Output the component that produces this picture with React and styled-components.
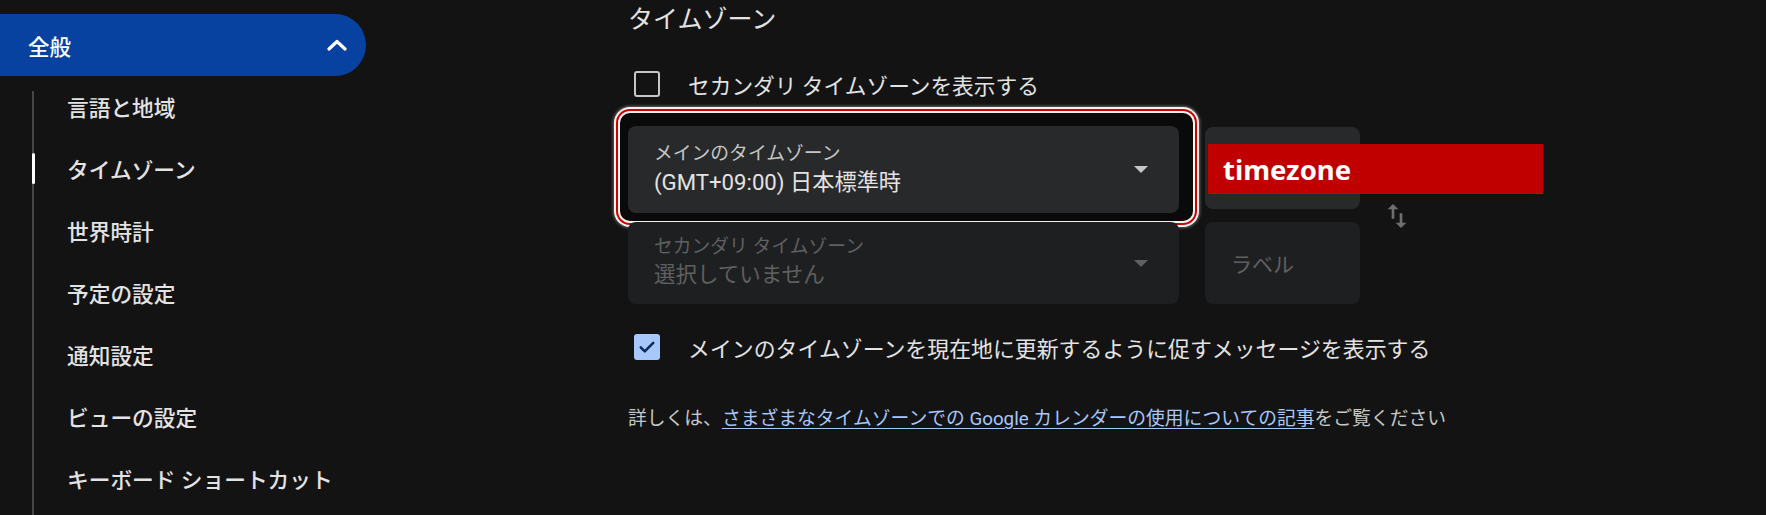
import React from "react";
import styled, { createGlobalStyle } from "styled-components";

const GlobalStyle = createGlobalStyle`
  html, body {
    margin: 0;
    background: #131313;
  }
  body {
    font-family: Roboto, "Noto Sans CJK JP", sans-serif;
    color: #e3e3e3;
  }
`;

const Page = styled.div`
  display: grid;
  grid-template-columns: 366px 1fr;
  height: 515px;
  overflow: hidden;
  background: #131313;
`;

const Sidebar = styled.nav`
  padding-top: 14px;
`;

const SectionHeader = styled.div`
  height: 62px;
  background: #0842a0;
  border-radius: 0 31px 31px 0;
  display: flex;
  align-items: center;
  justify-content: space-between;
  padding: 0 19px 0 28px;
  font-size: 21.5px;
  font-weight: 500;
  color: #fff;
`;

const NavList = styled.ul`
  position: relative;
  list-style: none;
  margin: -1px 0 0 32px;
  padding: 0;

  &::before {
    content: "";
    position: absolute;
    left: 0;
    top: 16px;
    bottom: -40px;
    width: 2px;
    background: #444746;
  }
`;

const NavItem = styled.li`
  position: relative;
  height: 62px;
  display: flex;
  align-items: center;
  padding-left: 35px;
  font-size: 21.7px;
  font-weight: 500;
  color: #e3e3e3;

  &::before {
    content: "";
    display: ${(p) => (p.$active ? "block" : "none")};
    position: absolute;
    left: 0;
    top: 16px;
    width: 3px;
    height: 31px;
    border-radius: 2px;
    background: #fff;
  }
`;

const Main = styled.main`
  padding-left: 262px;
`;

const Heading = styled.h2`
  margin: 0;
  padding-top: 2px;
  height: 34px;
  line-height: 36px;
  font-size: 25px;
  font-weight: 400;
  color: #e3e3e3;
`;

const CheckRow = styled.label`
  display: flex;
  align-items: center;
  gap: 28px;
  height: 44px;
  margin-top: ${(p) => p.$top}px;
  margin-bottom: ${(p) => p.$bottom || 0}px;
  padding-left: 6px;
  font-size: ${(p) => p.$size || 21.7}px;
  color: #e3e3e3;
`;

const Box = styled.span`
  box-sizing: border-box;
  width: 26px;
  height: 26px;
  border-radius: 3px;
  display: flex;
  align-items: center;
  justify-content: center;
  border: ${(p) => (p.$checked ? "none" : "2.5px solid #c4c7c5")};
  background: ${(p) => (p.$checked ? "#a8c7fa" : "transparent")};
`;

const Fields = styled.div`
  display: grid;
  grid-template-columns: 551px 155px 32px;
  grid-template-rows: 82px 82px;
  column-gap: 26px;
  row-gap: 13px;
`;

const Focus = styled.div`
  position: relative;
  margin: -1px 0 -4px;

  &::before {
    content: "";
    position: absolute;
    left: -8px;
    right: -14px;
    top: -13px;
    bottom: -8px;
    border-radius: 10px;
    background: #0a0a0a;
    box-shadow: 0 0 0 2px #f2f2f2, 0 0 0 4px #d00000, 0 0 0 6px #f2f2f2,
      0 0 3px 7px rgba(255, 255, 255, 0.35);
  }
`;

const Select = styled.div`
  position: relative;
  box-sizing: border-box;
  height: 100%;
  border-radius: 8px;
  background: ${(p) => (p.$disabled ? "#1e1f20" : "#28292b")};
  display: flex;
  align-items: center;
  justify-content: space-between;
  padding: 0 31px 0 26px;
`;

const SelectText = styled.div`
  display: flex;
  flex-direction: column;
  gap: 2px;
`;

const SelectLabel = styled.span`
  font-size: 18.8px;
  line-height: 22px;
  color: ${(p) => (p.$disabled ? "#5f6061" : "#c4c7c5")};
`;

const SelectValue = styled.span`
  font-size: ${(p) => (p.$disabled ? 21.5 : 22.2)}px;
  line-height: 30px;
  color: ${(p) => (p.$disabled ? "#5f6061" : "#e3e3e3")};
`;

const Caret = styled.span`
  width: 0;
  height: 0;
  border-left: 7px solid transparent;
  border-right: 7px solid transparent;
  border-top: 7px solid ${(p) => (p.$disabled ? "#5f6061" : "#c4c7c5")};
`;

const LabelField = styled.div`
  position: relative;
  box-sizing: border-box;
  border-radius: 8px;
  background: ${(p) => (p.$disabled ? "#1e1f20" : "#28292b")};
  display: flex;
  align-items: center;
  padding-left: 26px;
  font-size: 21px;
  color: ${(p) => (p.$disabled ? "#5f6061" : "#c4c7c5")};
`;

const Banner = styled.div`
  position: absolute;
  left: 3px;
  top: 17px;
  width: 335px;
  height: 50px;
  background: #c00000;
  display: flex;
  align-items: center;
  padding-left: 15px;
  box-sizing: border-box;
  font-family: "Noto Sans", sans-serif;
  font-weight: 700;
  font-size: 27.5px;
  color: #fff;
`;

const Swap = styled.div`
  grid-column: 3;
  grid-row: 1 / span 2;
  align-self: center;
  margin-left: -5px;
  display: flex;
`;

const Footer = styled.p`
  margin: 36px 0 0;
  line-height: 28px;
  font-size: 18.8px;
  color: #c4c7c5;

  a {
    color: #a8c7fa;
    text-decoration: underline;
    text-underline-offset: 3px;
  }
`;

const navItems = [
  "言語と地域",
  "タイムゾーン",
  "世界時計",
  "予定の設定",
  "通知設定",
  "ビューの設定",
  "キーボード ショートカット",
];

function Chevron() {
  return (
    <svg width="20" height="12" viewBox="0 0 20 12">
      <polyline
        points="2,10 10,2.5 18,10"
        fill="none"
        stroke="#fff"
        strokeWidth="3.2"
        strokeLinecap="round"
        strokeLinejoin="round"
      />
    </svg>
  );
}

function Check() {
  return (
    <svg width="20" height="20" viewBox="0 0 24 24">
      <path
        d="M4.5 12.5l4.8 4.8L19.5 7"
        fill="none"
        stroke="#0a2a5e"
        strokeWidth="3"
        strokeLinecap="round"
        strokeLinejoin="round"
      />
    </svg>
  );
}

function SwapIcon() {
  return (
    <svg width="32" height="32" viewBox="0 0 24 24" fill="#6e6f70">
      <path d="M16 17.01V10h-2v7.01h-3L15 21l4-3.99h-3zM9 3L5 6.99h3V14h2V6.99h3L9 3z" />
    </svg>
  );
}

export default function App() {
  return (
    <>
      <GlobalStyle />
      <Page>
        <Sidebar>
          <SectionHeader>
            全般
            <Chevron />
          </SectionHeader>
          <NavList>
            {navItems.map((item) => (
              <NavItem key={item} $active={item === "タイムゾーン"}>
                {item}
              </NavItem>
            ))}
          </NavList>
        </Sidebar>
        <Main>
          <Heading>タイムゾーン</Heading>
          <CheckRow $top={26} $bottom={21}>
            <Box />
            セカンダリ タイムゾーンを表示する
          </CheckRow>
          <Fields>
            <Focus>
              <Select>
                <SelectText>
                  <SelectLabel>メインのタイムゾーン</SelectLabel>
                  <SelectValue>(GMT+09:00) 日本標準時</SelectValue>
                </SelectText>
                <Caret />
              </Select>
            </Focus>
            <LabelField>
              <Banner>timezone</Banner>
            </LabelField>
            <Swap>
              <SwapIcon />
            </Swap>
            <Select $disabled>
              <SelectText>
                <SelectLabel $disabled>セカンダリ タイムゾーン</SelectLabel>
                <SelectValue $disabled>選択していません</SelectValue>
              </SelectText>
              <Caret $disabled />
            </Select>
            <LabelField $disabled>ラベル</LabelField>
          </Fields>
          <CheckRow $top={21} $size={21.9}>
            <Box $checked>
              <Check />
            </Box>
            メインのタイムゾーンを現在地に更新するように促すメッセージを表示する
          </CheckRow>
          <Footer>
            詳しくは、
            <a href="#">
              さまざまなタイムゾーンでの Google カレンダーの使用についての記事
            </a>
            をご覧ください
          </Footer>
        </Main>
      </Page>
    </>
  );
}
